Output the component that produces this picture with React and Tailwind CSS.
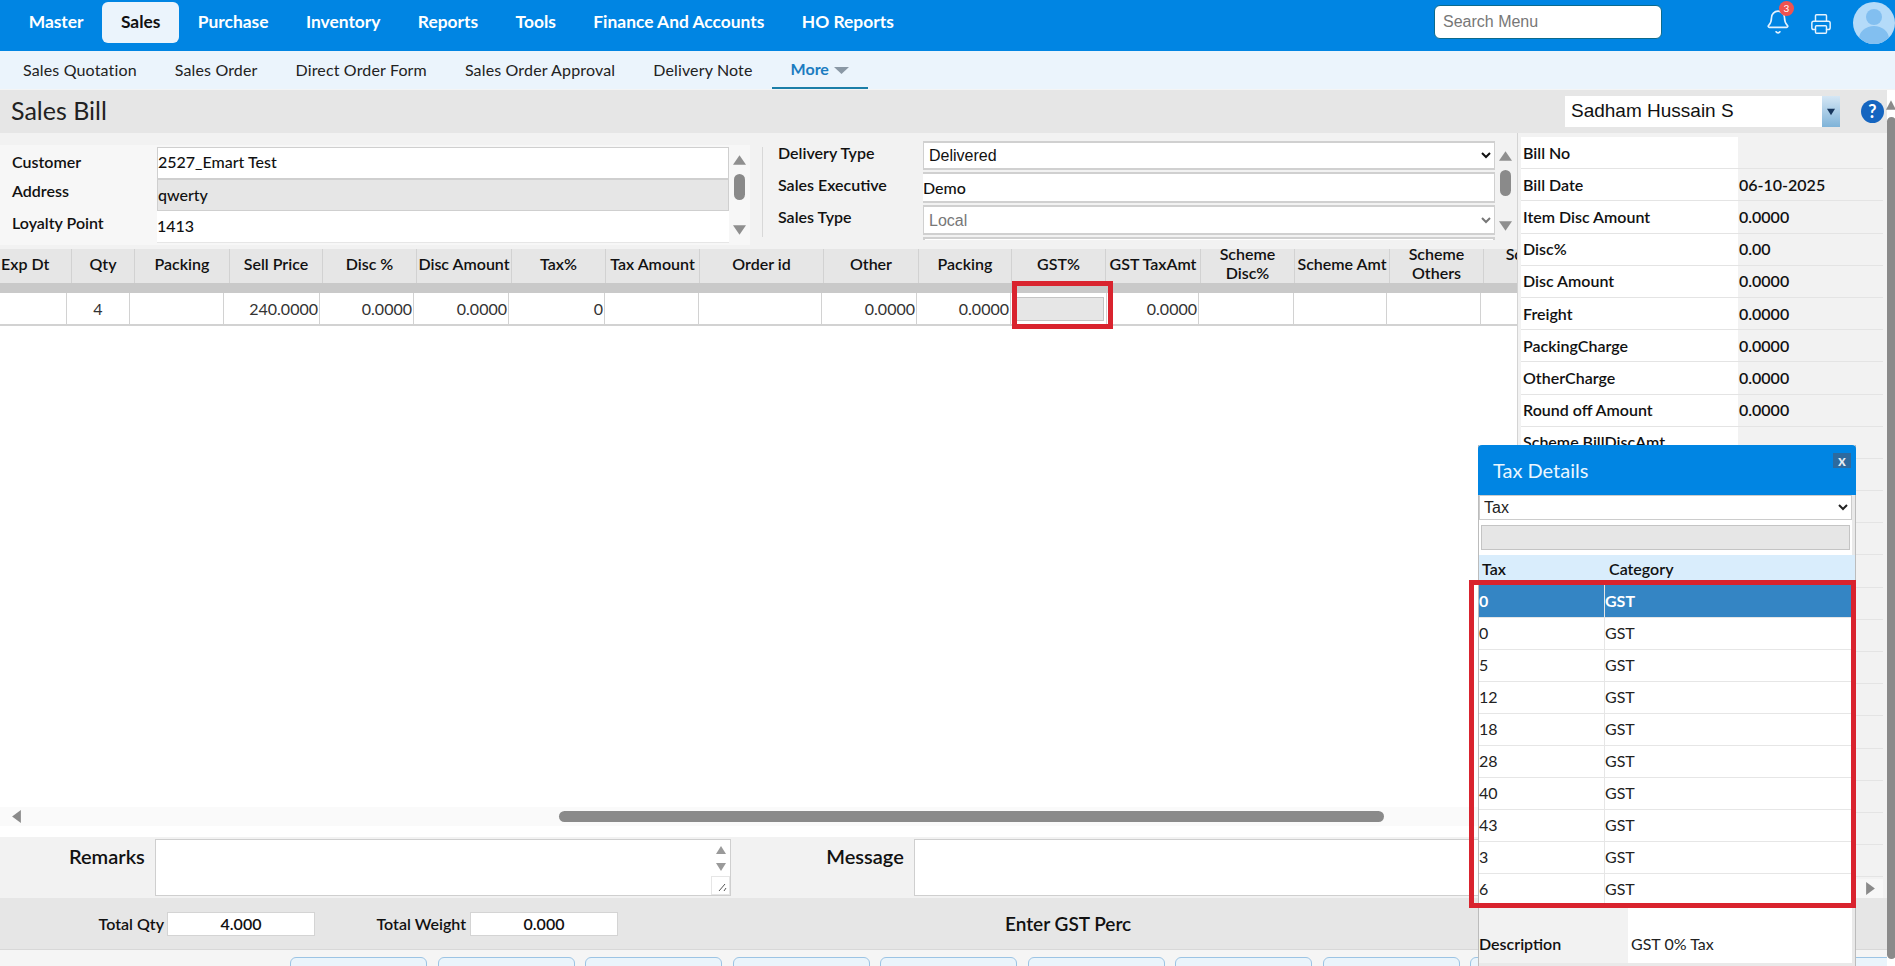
import React from "react";
import { Bell, Printer } from "lucide-react";

const navItems = ["Master", "Sales", "Purchase", "Inventory", "Reports", "Tools", "Finance And Accounts", "HO Reports"];
const subItems = ["Sales Quotation", "Sales Order", "Direct Order Form", "Sales Order Approval", "Delivery Note"];
const columns = ["Exp Dt", "Qty", "Packing", "Sell Price", "Disc %", "Disc Amount", "Tax%", "Tax Amount", "Order id", "Other", "Packing", "GST%", "GST TaxAmt", "Scheme\nDisc%", "Scheme Amt", "Scheme\nOthers", "Scheme\nCost"];
const rowValues = ["", "4", "", "240.0000", "0.0000", "0.0000", "0", "", "", "0.0000", "0.0000", "", "0.0000", "", "", "", ""];
const summary = [
  ["Bill No", ""],
  ["Bill Date", "06-10-2025"],
  ["Item Disc Amount", "0.0000"],
  ["Disc%", "0.00"],
  ["Disc Amount", "0.0000"],
  ["Freight", "0.0000"],
  ["PackingCharge", "0.0000"],
  ["OtherCharge", "0.0000"],
  ["Round off Amount", "0.0000"],
  ["Scheme BillDiscAmt", ""],
  ...Array.from({ length: 14 }, () => ["", ""]),
];
const taxRates = ["0", "0", "5", "12", "18", "28", "40", "43", "3", "6"];

const Tri = ({ dir, className }) => {
  const points = {
    up: "5,1 10,9 0,9",
    down: "0,1 10,1 5,9",
    left: "9,0 9,10 1,5",
    right: "1,0 1,10 9,5",
  };
  return (
    <svg viewBox="0 0 10 10" preserveAspectRatio="none" className={className}>
      <polygon points={points[dir]} fill="currentColor" />
    </svg>
  );
};

const MiniScroll = () => (
  <div className="w-[20px] h-full flex flex-col items-center text-[#8f8f8f] py-[9px]">
    <Tri dir="up" className="w-[13px] h-[12px] shrink-0" />
    <div className="w-[11px] h-[26px] mt-[8px] rounded-full bg-[#8a8a8a]" />
    <Tri dir="down" className="w-[13px] h-[12px] mt-auto shrink-0" />
  </div>
);

const App = () => {
  return (
    <div className="relative w-[1895px] h-[966px] overflow-hidden bg-white font-['Lato',sans-serif] text-[16px] text-[#111]">
      {/* top nav */}
      <div className="h-[51px] bg-[#0085e3] flex items-start pl-[10px] pt-[2px]">
        {navItems.map((item) => (
          <div
            key={item}
            className={
              item === "Sales"
                ? "h-[41px] px-[18.7px] flex items-center rounded-[6px] bg-[#ebf4fc] text-[#111] font-bold text-[17.4px]"
                : "h-[41px] px-[18.7px] flex items-center text-white font-bold text-[17.4px]"
            }
          >
            {item}
          </div>
        ))}
        <input
          placeholder="Search Menu"
          className="ml-auto mt-[3px] w-[228px] h-[34px] px-[8px] rounded-[6px] bg-white border border-[#0c6a8c] font-['Liberation_Sans',sans-serif] text-[16px] placeholder:text-[#777]"
        />
        <div className="relative ml-[103px] mt-[7px] w-[26px] h-[26px] text-[#e4f2fd]">
          <Bell size={26} strokeWidth={1.5} />
          <span className="absolute -top-[8px] left-[14px] w-[15px] h-[15px] rounded-full bg-[#ef5350] text-white text-[10px] flex items-center justify-center">
            3
          </span>
        </div>
        <Printer size={22} strokeWidth={1.6} className="ml-[19px] mt-[11px] text-[#e4f2fd]" />
        <div className="ml-[21px] w-[42px] h-[42px] rounded-full bg-[#b4dbf9] overflow-hidden shrink-0">
          <svg viewBox="0 0 42 42" className="w-full h-full">
            <circle cx="21" cy="15" r="8" fill="#82bff0" />
            <ellipse cx="21" cy="37" rx="15" ry="13" fill="#82bff0" />
          </svg>
        </div>
      </div>

      {/* sub nav */}
      <div className="h-[38px] bg-[#ebf4fc] flex items-stretch pl-[4px]">
        {subItems.map((item) => (
          <div key={item} className="px-[19px] flex items-center text-[#222] text-[16px] tracking-[0.15px]">
            {item}
          </div>
        ))}
        <div className="px-[19px] flex items-center gap-[5px] border-b-2 border-[#1b7ea8] text-[#1b7cc0] font-bold">
          More
          <Tri dir="down" className="w-[15px] h-[9px] mt-[3px] text-[#8a98a5]" />
        </div>
      </div>
      <div className="h-px bg-[#f4f4f4]" />

      <div className="flex h-[876px]">
        {/* page */}
        <div className="w-[1887px] flex flex-col">
          {/* title bar */}
          <div className="h-[43px] bg-[#e6e6e6] flex items-center justify-between pl-[11px] pr-[3px] shrink-0">
            <div className="text-[25px] text-[#222] -mt-[1px]">Sales Bill</div>
            <div className="flex items-center gap-[21px]">
              <div className="w-[275px] h-[31px] bg-white flex items-center justify-between">
                <span className="pl-[6px] font-['Liberation_Sans',sans-serif] text-[19px] text-[#111]">Sadham Hussain S</span>
                <span className="w-[18px] h-full bg-gradient-to-b from-[#d5e7f5] to-[#7fb3d8] flex items-center justify-center text-[#17365c]">
                  <Tri dir="down" className="w-[8px] h-[8px]" />
                </span>
              </div>
              <div className="w-[23px] h-[23px] rounded-full bg-[#1565c0] text-white font-bold text-[18px] flex items-center justify-center">
                ?
              </div>
            </div>
          </div>

          <div className="flex h-[765px] shrink-0">
            {/* left column */}
            <div className="w-[1518px] flex flex-col border-r border-[#d4d4d4]">
              {/* form */}
              <div className="h-[116px] bg-[#f2f2f2] flex shrink-0">
                <div className="w-[750px] h-[100px] mt-[12px] bg-[#f7f7f7] flex">
                  <div className="w-[157px] flex flex-col pl-[12px] pt-[2px] font-semibold">
                    <div className="h-[32px] flex items-center pb-[2px]">Customer</div>
                    <div className="h-[32px] flex items-center pb-[8px]">Address</div>
                    <div className="h-[32px] flex items-center pb-[8px]">Loyalty Point</div>
                  </div>
                  <div className="w-[572px] flex flex-col pt-[2px] font-medium">
                    <div className="h-[32px] bg-white border border-[#cfcfcf] flex items-center pb-[2px]">2527_Emart Test</div>
                    <div className="h-[32px] bg-[#e6e6e6] border border-[#cfcfcf] flex items-center">qwerty</div>
                    <div className="h-[32px] bg-white border-b border-[#e6e6e6] flex items-center pb-[1px]">1413</div>
                  </div>
                  <MiniScroll />
                </div>
                <div className="w-px h-[90px] mt-[14px] ml-[12px] bg-[#d8d8d8]" />
                <div className="w-[145px] ml-[15px] pt-[4px] flex flex-col font-semibold">
                  <div className="h-[32px] flex items-center">Delivery Type</div>
                  <div className="h-[32px] flex items-center">Sales Executive</div>
                  <div className="h-[32px] flex items-center">Sales Type</div>
                </div>
                <div className="w-[572px] pt-[8px] flex flex-col gap-[2px] overflow-hidden h-[107px]">
                  <select defaultValue="Delivered" className="h-[29px] shrink-0 bg-white border-y-2 border-x border-[#d0d0d0] pl-[1px] font-['Liberation_Sans',sans-serif] text-[16px]">
                    <option>Delivered</option>
                  </select>
                  <div className="h-[31px] shrink-0 bg-white border-y-2 border-l-0 border-r border-[#d0d0d0] flex items-center font-medium">Demo</div>
                  <select defaultValue="Local" className="h-[30px] shrink-0 bg-white border-y-2 border-x border-[#d0d0d0] pl-[1px] font-['Liberation_Sans',sans-serif] text-[16px] text-[#777]">
                    <option>Local</option>
                  </select>
                  <div className="h-[10px] shrink-0 bg-white border-2 border-[#d0d0d0]" />
                </div>
                <div className="h-[100px] mt-[8px]">
                  <MiniScroll />
                </div>
              </div>

              {/* grid */}
              <div className="h-[558px] overflow-hidden shrink-0">
                <div className="grid grid-cols-[72px_63px_95px_93px_94px_95px_94px_94px_124px_95px_93px_94px_95px_94px_95px_94px_100px] grid-rows-[34px] w-[1616px] h-[34px] bg-[#e6e6e6] font-semibold leading-[19px]">
                  {columns.map((col, i) => (
                    <div
                      key={i}
                      className={
                        i === 0
                          ? "flex items-center justify-start pl-[1px] pb-[6px] whitespace-pre-line border-r border-[#d2d2d2]"
                          : "flex items-center justify-center text-center pb-[6px] whitespace-pre-line border-r border-[#d2d2d2]"
                      }
                    >
                      {col}
                    </div>
                  ))}
                </div>
                <div className="h-[10px] bg-[#c9c9c9]" />
                <div className="grid grid-cols-[67px_63px_94px_96px_94px_95px_96px_94px_123px_95px_94px_96px_92px_95px_93px_94px_100px] w-[1616px] h-[33px] border-b-2 border-[#d2d2d2] text-[#333]">
                  {rowValues.map((v, i) => (
                    <div
                      key={i}
                      className={
                        i === 1 || i === 11
                          ? "flex items-center justify-center border-r border-[#d2d2d2]"
                          : "flex items-center justify-end pr-[1px] border-r border-[#d2d2d2]"
                      }
                    >
                      {i === 11 ? <div className="w-[88px] h-[24px] ml-[3px] bg-[#e6e6e6] border border-[#c4c4c4]" /> : v}
                    </div>
                  ))}
                </div>
              </div>

              {/* horizontal scroll */}
              <div className="h-[19px] bg-[#fafafa] flex items-center pl-[11px] shrink-0 text-[#8a8a8a]">
                <Tri dir="left" className="w-[11px] h-[13px]" />
                <div className="ml-[537px] w-[825px] h-[11px] rounded-full bg-[#8a8a8a]" />
              </div>
              <div className="h-[11px] shrink-0" />

              {/* remarks */}
              <div className="h-[61px] bg-[#f2f2f2] flex items-center shrink-0">
                <div className="w-[145px] h-[57px] pt-[2px] text-right text-[20px] font-semibold">Remarks</div>
                <div className="relative ml-[10px] w-[577px] h-[57px] bg-white border border-[#cfcfcf]">
                  <div className="absolute right-0 top-0 w-[19px] h-full flex flex-col items-center pt-[5px] gap-[7px] text-[#9a9a9a]">
                    <Tri dir="up" className="w-[10px] h-[10px]" />
                    <Tri dir="down" className="w-[10px] h-[10px]" />
                  </div>
                  <svg viewBox="0 0 19 19" className="absolute right-0 bottom-0 w-[19px] h-[19px]">
                    <rect x="0.5" y="0.5" width="18" height="18" fill="#fff" stroke="#e6e6e6" />
                    <path d="M8 15 L14 8 M13 15 L15 12" stroke="#555" strokeWidth="1" />
                  </svg>
                </div>
                <div className="w-[173px] h-[57px] pt-[2px] text-right text-[20px] font-semibold">Message</div>
                <div className="ml-[10px] w-[604px] h-[57px] bg-white border border-[#cfcfcf]" />
              </div>
            </div>

            {/* right panel */}
            <div className="w-[369px] bg-[#f2f2f2] flex flex-col pt-[4px] pl-[3px] pr-[4px]">
              <div className="flex-1 overflow-hidden font-semibold">
                {summary.map(([label, value], i) => (
                  <div key={i} className="h-[32.2px] flex border-b border-[#e4e4e4]">
                    <div className="w-[217px] bg-white flex items-center pl-[2px]">{label}</div>
                    <div className="flex-1 flex items-center pl-[1px]">{value}</div>
                  </div>
                ))}
              </div>
              <div className="h-[19px] bg-[#f7f7f7] flex items-center justify-end pr-[7px] text-[#8a8a8a] shrink-0">
                <Tri dir="right" className="w-[11px] h-[13px]" />
              </div>
            </div>
          </div>

          {/* totals */}
          <div className="h-[52px] bg-[#e6e6e6] border-b border-[#d8d8d8] flex items-center shrink-0 font-semibold">
            <div className="w-[164px] text-right">Total Qty</div>
            <div className="ml-[3px] w-[148px] h-[24px] bg-white border border-[#d4d4d4] flex items-center justify-center">4.000</div>
            <div className="w-[151px] text-right">Total Weight</div>
            <div className="ml-[4px] w-[148px] h-[24px] bg-white border border-[#d4d4d4] flex items-center justify-center">0.000</div>
            <div className="ml-[387px] mt-[2px] text-[19px]">Enter GST Perc</div>
          </div>

          {/* action buttons */}
          <div className="flex-1 bg-[#f5f5f5] flex gap-[10.5px] pl-[290px] pt-[7px] overflow-hidden">
            {Array.from({ length: 11 }, (_, i) => (
              <div key={i} className="w-[137px] h-[30px] shrink-0 rounded-t-[6px] bg-[#eaf4fb] border border-[#9cc4e4]" />
            ))}
          </div>
        </div>

        {/* page scrollbar */}
        <div className="w-[8px] flex flex-col items-center text-[#8a8a8a]">
          <Tri dir="up" className="w-[10px] h-[12px] mt-[9px] shrink-0" />
          <div className="w-[9px] h-[842px] mt-[6px] rounded-full bg-[#8a8a8a] shrink-0" />
        </div>
      </div>

      {/* tax popup */}
      <div className="absolute left-[1478px] top-[445px] w-[378px] h-[521px] bg-[#e9e9e9] border-x border-[#bcbcbc]">
        <div className="h-[50px] bg-[#0085e3] rounded-t-[4px] flex items-center justify-between pl-[15px] pr-[5px] -mx-px">
          <span className="text-[20px] text-[#eaf6ff]">Tax Details</span>
          <span className="mb-[19px] w-[18px] h-[15px] bg-[#2d6a9e] text-[#e6eef5] text-[15px] font-bold flex items-center justify-center">x</span>
        </div>
        <div className="w-[373px] bg-white">
          <select defaultValue="Tax" className="w-full h-[25px] bg-white border border-[#cccccc] pl-0 font-['Liberation_Sans',sans-serif] text-[16px] text-[#222]">
            <option>Tax</option>
          </select>
          <div className="h-[35px] flex items-center px-[2px]">
            <div className="w-full h-[25px] bg-[#e6e6e6] border border-[#c4c4c4]" />
          </div>
        </div>
        <div className="h-[30px] bg-[#d9edfc] flex items-start pt-[2px] font-semibold">
          <div className="w-[130px] pl-[3px]">Tax</div>
          <div>Category</div>
        </div>
        <div className="w-[373px] bg-white">
          {taxRates.map((rate, i) => (
            <div
              key={i}
              className={
                i === 0
                  ? "h-[32px] flex items-center bg-[#3485c4] text-white font-bold"
                  : "h-[32px] flex items-center border-t border-[#e6e6e6] text-[#222]"
              }
            >
              <div className="w-[126px] h-full flex items-center pb-[1px] border-r border-[#e6e6e6]">{rate}</div>
              <div className="pb-[1px]">GST</div>
            </div>
          ))}
        </div>
        <div className="flex w-[373px] h-[58px]">
          <div className="w-[149px] bg-[#f2f2f2] flex items-center pt-[20px] font-semibold">Description</div>
          <div className="flex-1 bg-white flex items-center pt-[20px] pl-[3px] text-[#222]">GST 0% Tax</div>
        </div>
      </div>

      {/* red highlights */}
      <div className="absolute left-[1469px] top-[580px] w-[387px] h-[328px] border-[5px] border-[#d9232e]" />
      <div className="absolute left-[1012px] top-[281px] w-[101px] h-[48px] border-[5px] border-[#d9232e]" />
    </div>
  );
};

export default App;
